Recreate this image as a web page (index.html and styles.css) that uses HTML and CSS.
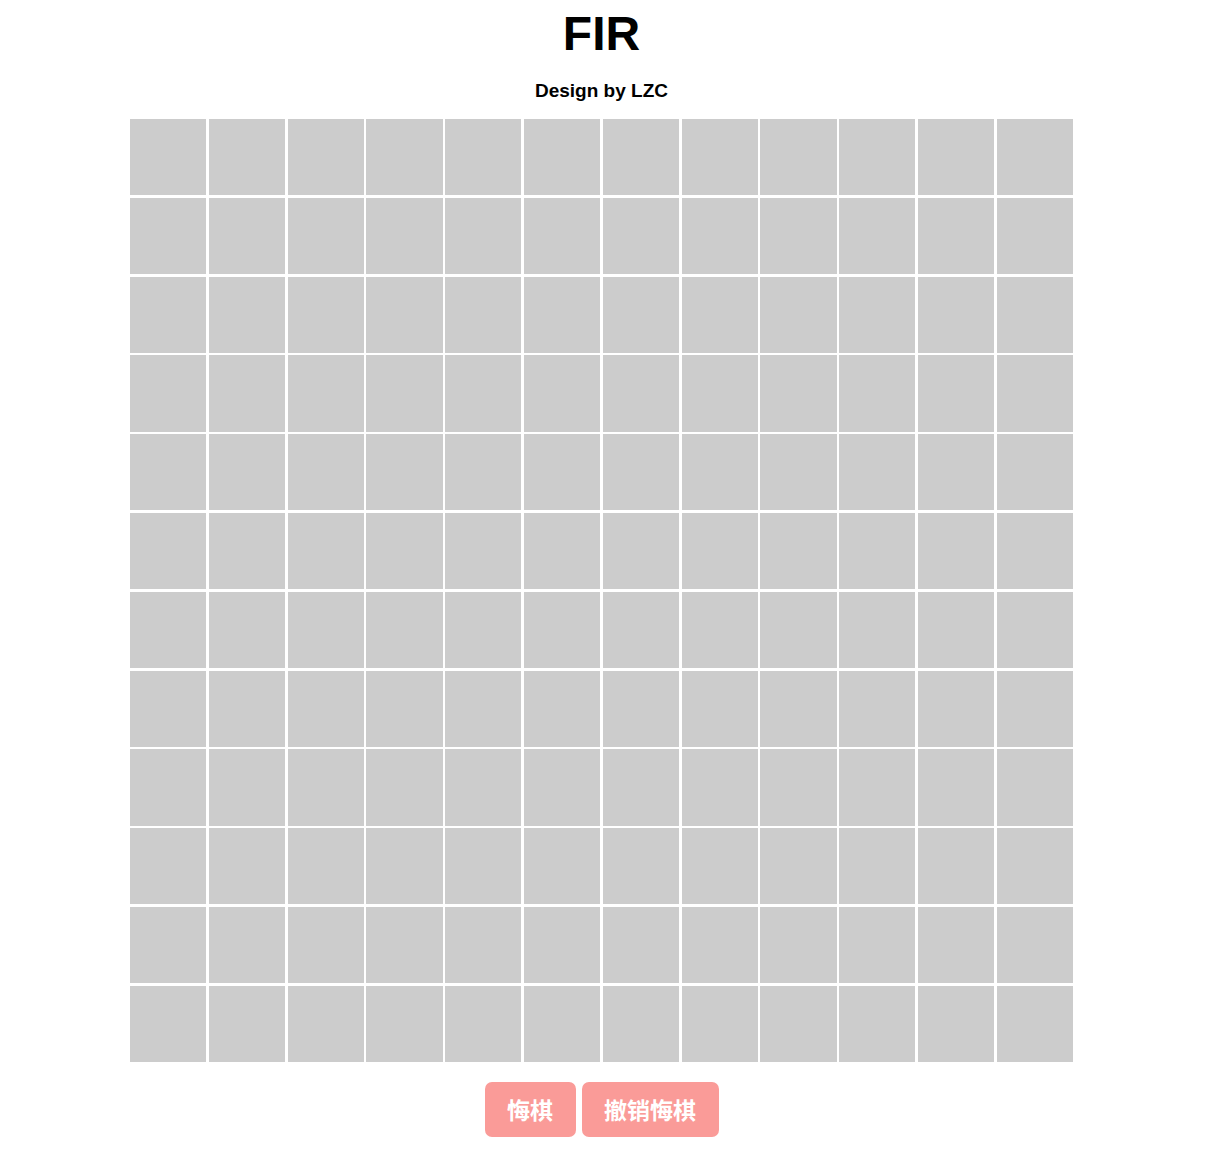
FILE: index.html
```html
<!DOCTYPE html>
<html lang="zh">
<head>
<meta charset="utf-8">
<title>FIR</title>
<link rel="stylesheet" href="styles.css">
</head>
<body>
<div class="page">
  <h1 class="title">FIR</h1>
  <h3 class="subtitle">Design by LZC</h3>
  <div class="board">
    <div class="cell"></div><div class="cell"></div><div class="cell"></div><div class="cell"></div><div class="cell"></div><div class="cell"></div><div class="cell"></div><div class="cell"></div><div class="cell"></div><div class="cell"></div><div class="cell"></div><div class="cell"></div>
    <div class="cell"></div><div class="cell"></div><div class="cell"></div><div class="cell"></div><div class="cell"></div><div class="cell"></div><div class="cell"></div><div class="cell"></div><div class="cell"></div><div class="cell"></div><div class="cell"></div><div class="cell"></div>
    <div class="cell"></div><div class="cell"></div><div class="cell"></div><div class="cell"></div><div class="cell"></div><div class="cell"></div><div class="cell"></div><div class="cell"></div><div class="cell"></div><div class="cell"></div><div class="cell"></div><div class="cell"></div>
    <div class="cell"></div><div class="cell"></div><div class="cell"></div><div class="cell"></div><div class="cell"></div><div class="cell"></div><div class="cell"></div><div class="cell"></div><div class="cell"></div><div class="cell"></div><div class="cell"></div><div class="cell"></div>
    <div class="cell"></div><div class="cell"></div><div class="cell"></div><div class="cell"></div><div class="cell"></div><div class="cell"></div><div class="cell"></div><div class="cell"></div><div class="cell"></div><div class="cell"></div><div class="cell"></div><div class="cell"></div>
    <div class="cell"></div><div class="cell"></div><div class="cell"></div><div class="cell"></div><div class="cell"></div><div class="cell"></div><div class="cell"></div><div class="cell"></div><div class="cell"></div><div class="cell"></div><div class="cell"></div><div class="cell"></div>
    <div class="cell"></div><div class="cell"></div><div class="cell"></div><div class="cell"></div><div class="cell"></div><div class="cell"></div><div class="cell"></div><div class="cell"></div><div class="cell"></div><div class="cell"></div><div class="cell"></div><div class="cell"></div>
    <div class="cell"></div><div class="cell"></div><div class="cell"></div><div class="cell"></div><div class="cell"></div><div class="cell"></div><div class="cell"></div><div class="cell"></div><div class="cell"></div><div class="cell"></div><div class="cell"></div><div class="cell"></div>
    <div class="cell"></div><div class="cell"></div><div class="cell"></div><div class="cell"></div><div class="cell"></div><div class="cell"></div><div class="cell"></div><div class="cell"></div><div class="cell"></div><div class="cell"></div><div class="cell"></div><div class="cell"></div>
    <div class="cell"></div><div class="cell"></div><div class="cell"></div><div class="cell"></div><div class="cell"></div><div class="cell"></div><div class="cell"></div><div class="cell"></div><div class="cell"></div><div class="cell"></div><div class="cell"></div><div class="cell"></div>
    <div class="cell"></div><div class="cell"></div><div class="cell"></div><div class="cell"></div><div class="cell"></div><div class="cell"></div><div class="cell"></div><div class="cell"></div><div class="cell"></div><div class="cell"></div><div class="cell"></div><div class="cell"></div>
    <div class="cell"></div><div class="cell"></div><div class="cell"></div><div class="cell"></div><div class="cell"></div><div class="cell"></div><div class="cell"></div><div class="cell"></div><div class="cell"></div><div class="cell"></div><div class="cell"></div><div class="cell"></div>
  </div>
  <div class="actions">
    <button class="btn btn-undo">悔棋</button>
    <button class="btn btn-redo">撤销悔棋</button>
  </div>
</div>
</body>
</html>
```
FILE: styles.css
```css
html, body {
  margin: 0;
  padding: 0;
  background: #fff;
}

body {
  font-family: "Liberation Sans", Arial, "Noto Sans CJK SC", sans-serif;
  color: #000;
}

.page {
  width: 1203px;
  display: flex;
  flex-direction: column;
  align-items: center;
}

.title {
  margin: 6px 0 0;
  font-size: 48px;
  line-height: 55px;
  font-weight: bold;
}

.subtitle {
  margin: 19px 0 0;
  font-size: 19px;
  line-height: 22px;
  font-weight: bold;
}

.board {
  margin-top: 17px;
  width: 943px;
  height: 943px;
  display: grid;
  grid-template-columns: repeat(12, 1fr);
  grid-template-rows: repeat(12, 1fr);
  gap: 2.6px;
}

.cell {
  background: #cccccc;
}

.actions {
  margin-top: 20px;
  display: flex;
  gap: 6px;
}

.btn {
  height: 55px;
  padding: 3px 22.5px 0;
  border: none;
  border-radius: 7px;
  background: #fa9b98;
  color: #fff;
  font-family: "Liberation Sans", "Noto Sans CJK SC", sans-serif;
  font-size: 23px;
  font-weight: bold;
  line-height: 52px;
  cursor: pointer;
}
```
